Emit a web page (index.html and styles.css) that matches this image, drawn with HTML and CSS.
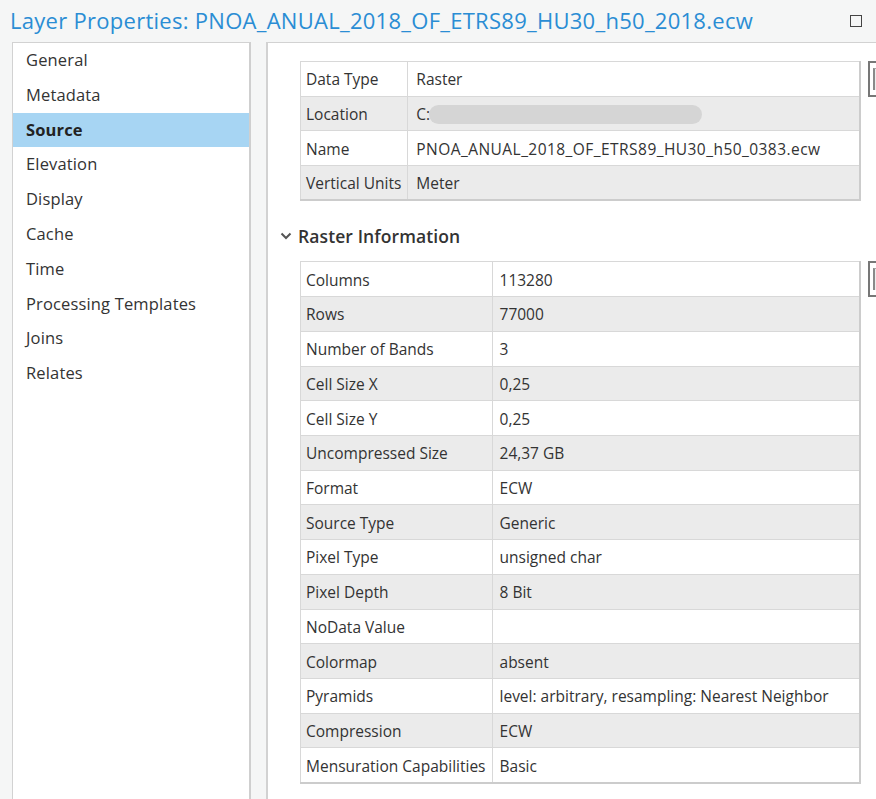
FILE: index.html
```html
<!DOCTYPE html>
<html>
<head>
<meta charset="utf-8">
<link rel="stylesheet" href="styles.css">
</head>
<body>
<div class="window">
  <header class="titlebar">
    <h1 class="title">Layer Properties: PNOA_ANUAL_2018_OF_ETRS89_HU30_h50_2018.ecw</h1>
    <span class="max-btn"></span>
  </header>
  <div class="body">
    <nav class="nav">
      <div class="nav-item">General</div>
      <div class="nav-item">Metadata</div>
      <div class="nav-item active">Source</div>
      <div class="nav-item">Elevation</div>
      <div class="nav-item">Display</div>
      <div class="nav-item">Cache</div>
      <div class="nav-item">Time</div>
      <div class="nav-item">Processing Templates</div>
      <div class="nav-item">Joins</div>
      <div class="nav-item">Relates</div>
    </nav>
    <main class="content">
      <div class="table-row">
        <table class="props props-a">
          <tr><td class="k">Data Type</td><td>Raster</td></tr>
          <tr class="alt"><td class="k">Location</td><td><span class="loc">C:<span class="blur"></span></span></td></tr>
          <tr><td class="k">Name</td><td class="fname">PNOA_ANUAL_2018_OF_ETRS89_HU30_h50_0383.ecw</td></tr>
          <tr class="alt"><td class="k">Vertical Units</td><td>Meter</td></tr>
        </table>
        <span class="side-btn"><span class="side-inner"></span></span>
      </div>
      <div class="section-head">
        <svg class="chev" width="12" height="8" viewBox="0 0 12 8"><path d="M1.5 1.5 L6 6 L10.5 1.5" fill="none" stroke="#555" stroke-width="2"/></svg>
        <span>Raster Information</span>
      </div>
      <div class="table-row">
        <table class="props props-b">
          <tr><td class="k">Columns</td><td>113280</td></tr>
          <tr class="alt"><td class="k">Rows</td><td>77000</td></tr>
          <tr><td class="k">Number of Bands</td><td>3</td></tr>
          <tr class="alt"><td class="k">Cell Size X</td><td>0,25</td></tr>
          <tr><td class="k">Cell Size Y</td><td>0,25</td></tr>
          <tr class="alt"><td class="k">Uncompressed Size</td><td>24,37 GB</td></tr>
          <tr><td class="k">Format</td><td>ECW</td></tr>
          <tr class="alt"><td class="k">Source Type</td><td>Generic</td></tr>
          <tr><td class="k">Pixel Type</td><td>unsigned char</td></tr>
          <tr class="alt"><td class="k">Pixel Depth</td><td>8 Bit</td></tr>
          <tr><td class="k">NoData Value</td><td></td></tr>
          <tr class="alt"><td class="k">Colormap</td><td>absent</td></tr>
          <tr><td class="k">Pyramids</td><td>level: arbitrary, resampling: Nearest Neighbor</td></tr>
          <tr class="alt"><td class="k">Compression</td><td>ECW</td></tr>
          <tr><td class="k">Mensuration Capabilities</td><td>Basic</td></tr>
        </table>
        <span class="side-btn"><span class="side-inner"></span></span>
      </div>
    </main>
  </div>
</div>
</body>
</html>
```
FILE: styles.css
```css
* { box-sizing: border-box; }
html, body { margin: 0; padding: 0; }
body {
  background: #f5f6f6;
  font-family: "Open Sans", "Noto Sans", sans-serif;
  color: #333;
  width: 876px;
  height: 799px;
  overflow: hidden;
}
.window { display: flex; flex-direction: column; height: 799px; }
.titlebar {
  height: 42px;
  display: flex;
  align-items: center;
  padding: 0 14px 0 10px;
}
.title {
  flex: 1;
  margin: 0;
  font-weight: 400;
  font-size: 22px;
  color: #2a8dd4;
  white-space: nowrap;
  letter-spacing: 0.28px;
  position: relative;
  top: -1px;
}
.max-btn {
  flex: none;
  width: 12px;
  height: 12px;
  border: 1.5px solid #444;
  margin-top: -1px;
}
.body { flex: 1; display: flex; padding-left: 12px; min-height: 0; }
.nav {
  width: 239px;
  flex: none;
  background: #fff;
  border: 1px solid #d2d2d2;
  border-right: 2px solid #cfcfcf;
  border-bottom: 0;
}
.nav-item {
  height: 34.8px;
  line-height: 33px;
  padding-left: 13px;
  font-size: 16.5px;
  color: #333;
  letter-spacing: 0.15px;
}
.nav-item.active { background: #a7d5f3; font-weight: 700; color: #222; }
.content {
  flex: 1;
  margin-left: 15px;
  background: #fff;
  border-top: 1px solid #d2d2d2;
  border-left: 2px solid #d2d2d2;
  padding: 18px 0 0 32px;
  overflow: hidden;
  min-width: 0;
}
.table-row { display: flex; align-items: flex-start; gap: 7px; }
.props {
  border-collapse: collapse;
  width: 561px;
  flex: none;
  font-size: 15.5px;
  border-right: 2px solid #cccccc;
  border-bottom: 2px solid #cccccc;
}
.props td {
  border: 1px solid #d8d8d8;
  height: 34.73px;
  padding: 1px 6px 0 5px;
  white-space: nowrap;
  color: #333;
}
.props tr.alt td { background: #ebebeb; }
.props-a td.k { width: 106px; }
.props-a td:not(.k) { padding-left: 8px; }
.props-a td.fname { letter-spacing: 0.45px; }
.props-b td.k { width: 190px; }
.props-b td:not(.k) { padding-left: 7px; }
.props tr td:last-child { border-right: 0; }
.loc { display: inline-flex; align-items: center; }
.blur {
  display: inline-block;
  width: 273px;
  height: 19px;
  border-radius: 10px;
  background: #d5d5d5;
  margin-left: -1px;
}
.side-btn {
  flex: none;
  width: 16px;
  height: 36px;
  border: 2px solid #777;
  border-right: 0;
  padding: 5px 0 0 3px;
  background: #fff;
}
.side-inner {
  display: block;
  width: 10px;
  height: 22px;
  border-left: 2px solid #8a8a8a;
  border-top: 1px solid #aaa;
  background: #eee;
}
.section-head {
  display: flex;
  align-items: center;
  gap: 6px;
  margin: 25px 0 15px -20px;
  height: 20px;
  font-size: 17.5px;
  font-weight: 600;
  color: #333;
  letter-spacing: 0.1px;
}
.chev { flex: none; }
```
